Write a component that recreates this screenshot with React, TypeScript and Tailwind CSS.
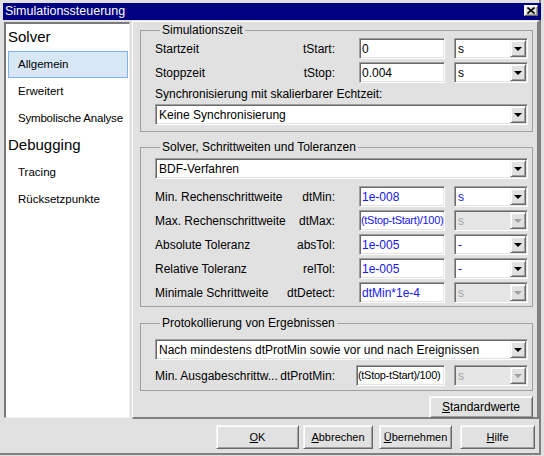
import type { ReactNode } from "react";

const sunken =
  "border border-t-[#a0a0a0] border-l-[#a0a0a0] border-b-white border-r-white shadow-[inset_1px_1px_0_#696969,inset_-1px_-1px_0_#e3e3e3]";
const raised =
  "border border-t-[#f4f4f4] border-l-[#f4f4f4] border-b-[#696969] border-r-[#696969] shadow-[inset_1px_1px_0_#fff,inset_-1px_-1px_0_#a0a0a0] bg-[#e1e1e1]";

const TextBox = ({
  value,
  blue = false,
  tight = false,
  className = "",
}: {
  value: string;
  blue?: boolean;
  tight?: boolean;
  className?: string;
}) => (
  <div
    className={`${sunken} ${className} h-[21px] bg-white flex items-center overflow-hidden whitespace-nowrap ${
      tight ? "pl-[1px] text-[11px] tracking-[-0.3px]" : "pl-[2px]"
    } ${blue ? "text-[#1515f0]" : "text-black"}`}
  >
    {value}
  </div>
);

const Combo = ({
  value,
  blue = false,
  disabled = false,
  className = "",
}: {
  value: string;
  blue?: boolean;
  disabled?: boolean;
  className?: string;
}) => (
  <div
    className={`${sunken} ${className} h-[21px] flex items-center justify-between pl-[3px] pr-[1px] ${
      disabled ? "bg-[#e6e6e6] text-[#a3a3a3]" : "bg-white"
    } ${!disabled && blue ? "text-[#1515f0]" : ""}`}
  >
    <span className="whitespace-nowrap overflow-hidden">{value}</span>
    <span className={`${raised} w-[16px] h-[17px] shrink-0 flex items-center justify-center`}>
      <span
        className={`w-0 h-0 border-x-[4px] border-t-[4px] border-x-transparent ${
          disabled ? "border-t-[#a0a0a0]" : "border-t-black"
        }`}
      />
    </span>
  </div>
);

const Row = ({
  label,
  name,
  children,
}: {
  label: string;
  name: string;
  children: ReactNode;
}) => (
  <div className="flex items-center h-[21px]">
    <span className="w-[125px] whitespace-nowrap">{label}</span>
    <span className="w-[55px] text-right whitespace-nowrap">{name}</span>
    {children}
  </div>
);

const Group = ({
  title,
  className = "",
  children,
}: {
  title: string;
  className?: string;
  children: ReactNode;
}) => (
  <fieldset className={`w-[393px] border border-[#a0a0a0] pl-[14px] ${className}`}>
    <legend className="ml-[5px] px-[2px] leading-[15px]">{title}</legend>
    {children}
  </fieldset>
);

const PushButton = ({
  children,
  className = "",
}: {
  children: ReactNode;
  className?: string;
}) => (
  <button className={`${raised} ${className} flex items-center justify-center`}>{children}</button>
);

const navItem = "h-[27px] flex items-center pl-[12px] text-[11.5px] whitespace-nowrap";

export default function App() {
  return (
    <div className="w-[544px] h-[456px] bg-[#e1e1e1] overflow-hidden font-['Liberation_Sans',Arial,sans-serif] text-[12px] text-black">
      <div className="w-[541px] h-[455px] border-r-2 border-b-2 border-[#808080] flex flex-col pt-[3px]">
        {/* Title bar */}
        <div className="ml-[3px] w-[538px] h-[17px] bg-[#000080] flex items-start justify-between pl-[2px] pr-[3px]">
          <span className="text-white text-[12.5px] leading-[17px]">Simulationssteuerung</span>
          <span className={`${raised} mt-[2px] w-[14px] h-[11px] flex items-center justify-center`}>
            <svg width="8" height="7" viewBox="0 0 8 7">
              <path d="M0.5 0.5 L7.5 6.5 M7.5 0.5 L0.5 6.5" stroke="black" strokeWidth="1.6" />
            </svg>
          </span>
        </div>

        <div className="flex mt-[1px]">
          {/* Navigation list */}
          <div className="ml-[4px] mt-[1px] w-[126px] h-[396px] overflow-hidden bg-white border-t-2 border-l-2 border-t-[#7a7a7a] border-l-[#7a7a7a] border-b border-r border-b-[#f0f0f0] border-r-[#f0f0f0]">
            <div className="h-[27px] flex items-center pl-[2px] text-[15px]">Solver</div>
            <div className="ml-[2px] w-[120px] h-[27px] flex items-center pl-[9px] text-[11.5px] bg-[#d7e7f7] border border-[#7fb4ea]">
              Allgemein
            </div>
            <div className={navItem}>Erweitert</div>
            <div className={`${navItem} tracking-[-0.2px]`}>Symbolische Analyse</div>
            <div className="h-[27px] flex items-center pl-[2px] text-[15px]">Debugging</div>
            <div className={navItem}>Tracing</div>
            <div className={navItem}>Rücksetzpunkte</div>
          </div>

          {/* Settings panel */}
          <div className="ml-[2px] w-[407px] h-[398px] border-t border-l border-white border-r-2 border-b-2 border-r-[#808080] border-b-[#808080] pl-[7px] pt-[1px] flex flex-col">
            <Group title="Simulationszeit" className="pb-[6px]">
              <div className="flex flex-col gap-[3px]">
                <Row label="Startzeit" name="tStart:">
                  <TextBox value="0" className="ml-[24px] w-[86px]" />
                  <Combo value="s" className="ml-[9px] w-[74px]" />
                </Row>
                <Row label="Stoppzeit" name="tStop:">
                  <TextBox value="0.004" className="ml-[24px] w-[86px]" />
                  <Combo value="s" className="ml-[9px] w-[74px]" />
                </Row>
              </div>
              <div className="mt-[4px] leading-[15px]">Synchronisierung mit skalierbarer Echtzeit:</div>
              <Combo value="Keine Synchronisierung" className="mt-[2px] w-[373px]" />
            </Group>

            <Group title="Solver, Schrittweiten und Toleranzen" className="mt-[8px] pb-[3px]">
              <Combo value="BDF-Verfahren" className="mt-[3px] w-[373px]" />
              <div className="mt-[7px] flex flex-col gap-[3px]">
                <Row label="Min. Rechenschrittweite" name="dtMin:">
                  <TextBox value="1e-008" blue className="ml-[24px] w-[86px]" />
                  <Combo value="s" blue className="ml-[9px] w-[74px]" />
                </Row>
                <Row label="Max. Rechenschrittweite" name="dtMax:">
                  <TextBox value="(tStop-tStart)/100)" blue tight className="ml-[24px] w-[86px]" />
                  <Combo value="s" disabled className="ml-[9px] w-[74px]" />
                </Row>
                <Row label="Absolute Toleranz" name="absTol:">
                  <TextBox value="1e-005" blue className="ml-[24px] w-[86px]" />
                  <Combo value="-" blue className="ml-[9px] w-[74px]" />
                </Row>
                <Row label="Relative Toleranz" name="relTol:">
                  <TextBox value="1e-005" blue className="ml-[24px] w-[86px]" />
                  <Combo value="-" blue className="ml-[9px] w-[74px]" />
                </Row>
                <Row label="Minimale Schrittweite" name="dtDetect:">
                  <TextBox value="dtMin*1e-4" blue className="ml-[24px] w-[86px]" />
                  <Combo value="s" disabled className="ml-[9px] w-[74px]" />
                </Row>
              </div>
            </Group>

            <Group title="Protokollierung von Ergebnissen" className="mt-[9px] pb-[4px]">
              <Combo
                value="Nach mindestens dtProtMin sowie vor und nach Ereignissen"
                className="mt-[8px] w-[373px]"
              />
              <div className="mt-[5px]">
                <Row label="Min. Ausgabeschrittw..." name="dtProtMin:">
                  <TextBox value="(tStop-tStart)/100)" tight className="ml-[21px] w-[89px]" />
                  <Combo value="s" disabled className="ml-[9px] w-[74px]" />
                </Row>
              </div>
            </Group>

            <div className="w-[393px] mt-[5px] flex justify-end">
              <PushButton className="w-[104px] h-[22px]">
                <span>
                  <u>S</u>tandardwerte
                </span>
              </PushButton>
            </div>
          </div>
        </div>

        {/* Dialog buttons */}
        <div className="flex mt-[6px] text-[11px]">
          <PushButton className="ml-[216px] w-[83px] h-[24px]">
            <span>
              <u>O</u>K
            </span>
          </PushButton>
          <PushButton className="ml-[4px] w-[70px] h-[24px]">
            <span>
              <u>A</u>bbrechen
            </span>
          </PushButton>
          <PushButton className="ml-[6px] w-[73px] h-[24px]">
            <span>
              <u>Ü</u>bernehmen
            </span>
          </PushButton>
          <PushButton className="ml-[8px] w-[75px] h-[24px]">
            <span>
              <u>H</u>ilfe
            </span>
          </PushButton>
        </div>
      </div>
    </div>
  );
}
